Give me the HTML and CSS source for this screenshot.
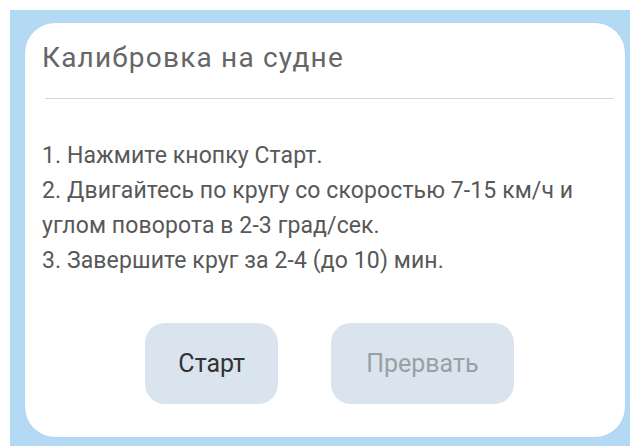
FILE: index.html
```html
<!DOCTYPE html>
<html lang="ru">
<head>
<meta charset="utf-8">
<title>Калибровка на судне</title>
<link rel="stylesheet" href="styles.css">
</head>
<body>
<div class="frame">
  <section class="card">
    <h1 class="card-title">Калибровка на судне</h1>
    <hr class="divider">
    <div class="steps">
      <p>1. Нажмите кнопку Старт.</p>
      <p>2. Двигайтесь по кругу со скоростью 7-15 км/ч и углом поворота в 2-3 град/сек.</p>
      <p>3. Завершите круг за 2-4 (до 10) мин.</p>
    </div>
    <div class="actions">
      <button class="btn btn-start" type="button">Старт</button>
      <button class="btn btn-stop" type="button" disabled>Прервать</button>
    </div>
  </section>
</div>
</body>
</html>
```

FILE: styles.css
```css
html, body {
  margin: 0;
  height: 100%;
  background: #ffffff;
}

body {
  padding: 10px 0 0 10px;
  box-sizing: border-box;
  font-family: Roboto, "Noto Sans", "Liberation Sans", sans-serif;
}

.frame {
  height: 100%;
  background: #b4d9f5;
  padding: 13px 5px 9px 15px;
  box-sizing: border-box;
  display: flex;
}

.card {
  flex: 1;
  background: #ffffff;
  border-radius: 30px;
  padding: 18px 17px 0 17px;
  box-sizing: border-box;
  display: flex;
  flex-direction: column;
  box-shadow: 0 0 1px rgba(120, 150, 170, 0.4);
}

.card-title {
  margin: 0;
  font-weight: 400;
  font-size: 28px;
  line-height: 34px;
  letter-spacing: 1.2px;
  color: #666666;
}

.divider {
  margin: 23px -5px 0 3px;
  border: 0;
  border-top: 1px solid #c8d8de;
  height: 0;
}

.steps {
  margin-top: 39px;
  color: #585858;
  font-size: 23px;
  line-height: 35px;
  letter-spacing: 0.1px;
}

.steps p {
  margin: 0;
}

.actions {
  margin-top: 45px;
  display: flex;
  justify-content: center;
  gap: 53px;
  padding-left: 9px;
}

.btn {
  height: 81px;
  border: 0;
  border-radius: 20px;
  background: #dae4ee;
  font-family: inherit;
  font-size: 25px;
  padding: 0 33px;
}

.btn-start {
  color: #333333;
}

.btn-stop {
  color: #9a9fa4;
  padding: 0 35px;
}
```
